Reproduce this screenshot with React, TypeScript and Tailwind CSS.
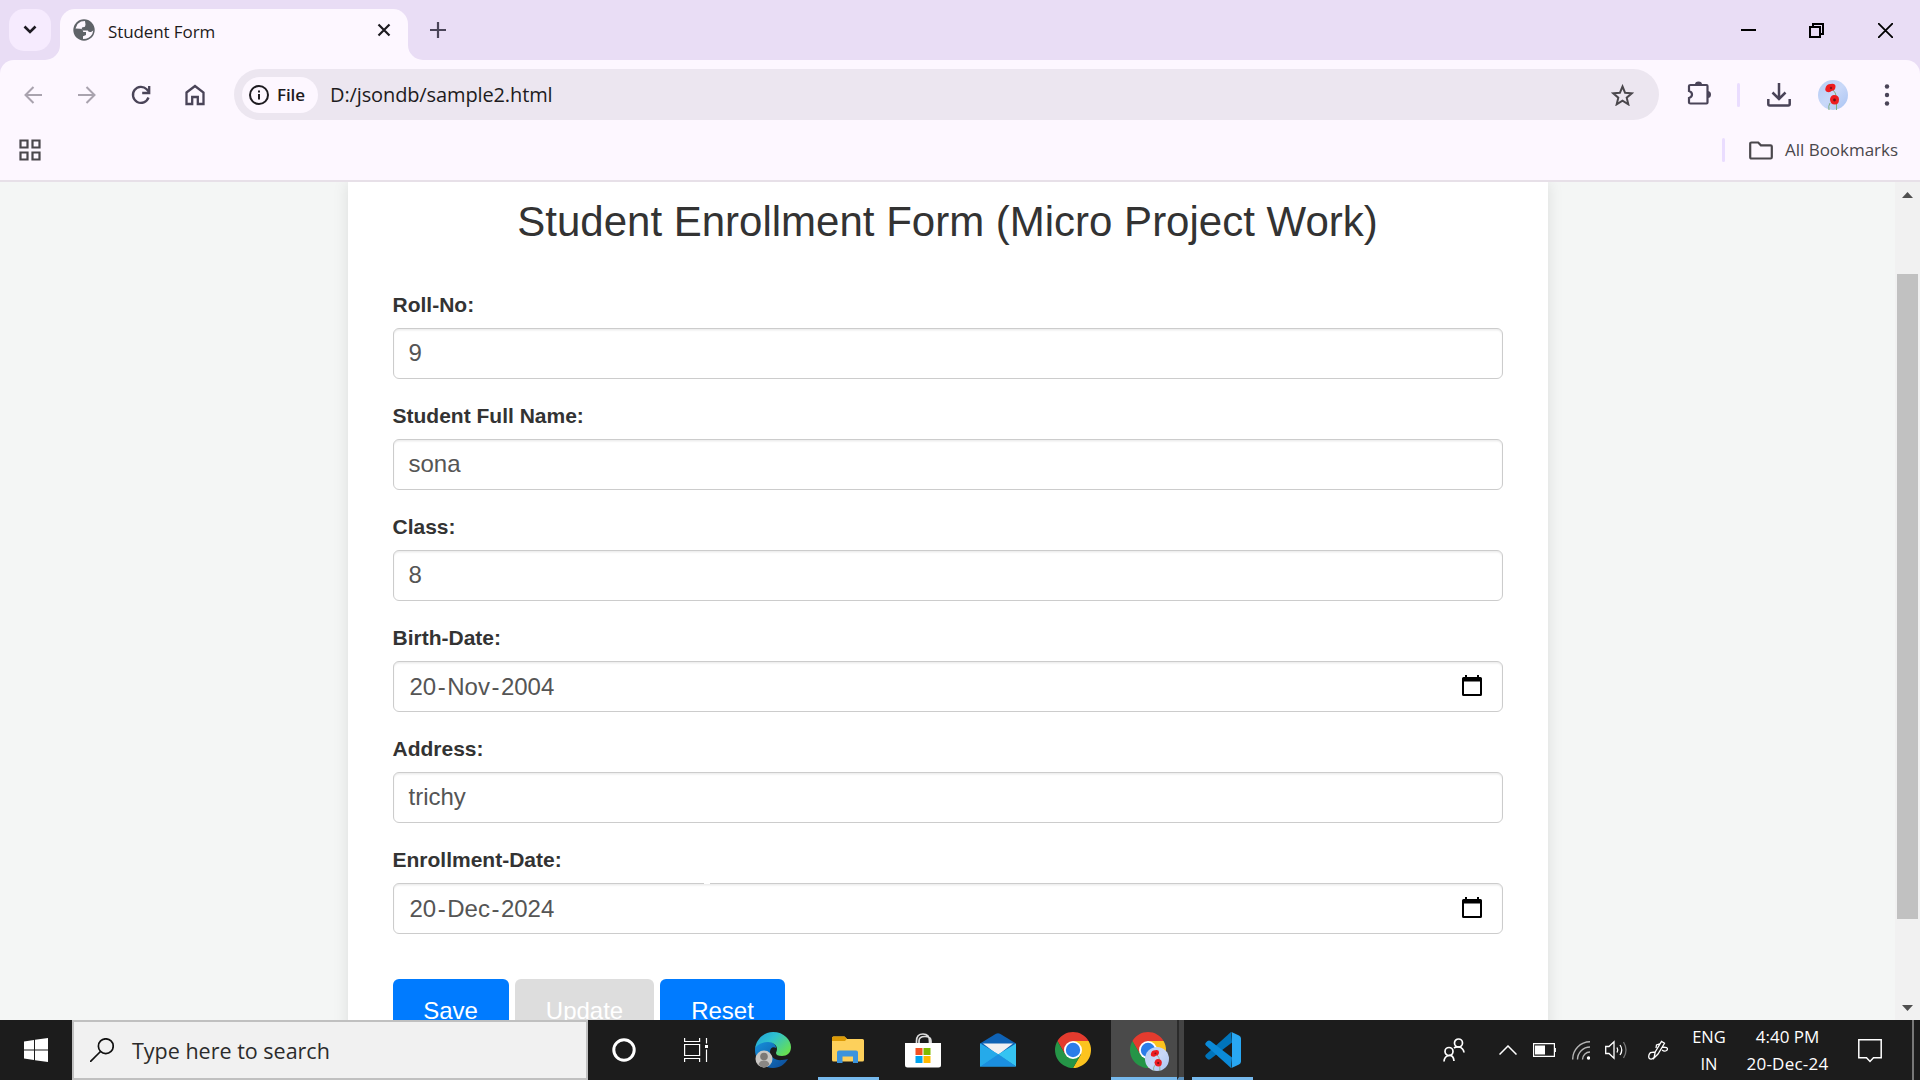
import type { ReactNode } from "react";

const ui = "font-['Open_Sans',sans-serif]";

function Poppies({ size }: { size: number }) {
  return (
    <svg width={size} height={size} viewBox="0 0 30 30">
      <defs>
        <linearGradient id="sky" x1="0" y1="0" x2="1" y2="1">
          <stop offset="0" stopColor="#b4cdf6" />
          <stop offset=".5" stopColor="#c9d8f8" />
          <stop offset="1" stopColor="#a9c3f3" />
        </linearGradient>
      </defs>
      <circle cx="15" cy="15" r="15" fill="url(#sky)" />
      <path d="M15 10q3 3 3 6M18.500 24v6M12 23q-2 3-1 7" stroke="#7fae80" strokeWidth="1" fill="none" />
      <path d="M7.500 8q1-4 5-4 5-1 5 2.500 0 4-4 4.500-1 1.500-4 1-3-1-2-4Z" fill="#ee1c20" />
      <path d="M12 19q1-4 4-4 5 0 5 4.500 0 5-4 5-5 0-5-5.500Z" fill="#ee1c20" />
      <circle cx="13" cy="8" r="1.200" fill="#8a1418" />
      <circle cx="16.500" cy="20" r="1.400" fill="#6a1418" />
    </svg>
  );
}

function ChromeLogo() {
  return (
    <svg width="36" height="36" viewBox="0 0 48 48">
      <path d="M24 12H44.780A24 24 0 0 0 3.220 12L13.600 30Z" fill="#e33b2e" />
      <path d="M34.390 30 24 48A24 24 0 0 0 44.780 12H24Z" fill="#fcc31e" />
      <path d="M13.600 30 3.220 12A24 24 0 0 0 24 48L34.390 30Z" fill="#259547" />
      <circle cx="24" cy="24" r="12" fill="#fff" />
      <circle cx="24" cy="24" r="9.600" fill="#2b7de9" />
    </svg>
  );
}

function EdgeLogo() {
  return (
    <svg width="36" height="36" viewBox="0 0 36 36">
      <defs>
        <linearGradient id="edgeTop" x1="0" y1="0" x2="1" y2=".7">
          <stop offset="0" stopColor="#1f9fd9" />
          <stop offset=".45" stopColor="#2fc0cf" />
          <stop offset="1" stopColor="#66e052" />
        </linearGradient>
        <linearGradient id="edgeLow" x1="0" y1="0" x2="1" y2="1">
          <stop offset="0" stopColor="#1691dc" />
          <stop offset="1" stopColor="#0d4a96" />
        </linearGradient>
      </defs>
      <path d="M0 18C0 12 6 9 12 9c6 0 9 4 9 7-3-2-6 0-6 4 0 5 6 9 12 8 3 0 5-1 6-1C30 32 25 36 18 36 8 36 0 28 0 18Z" fill="url(#edgeLow)" />
      <path d="M0 17C1 7 9 0 18 0c11 0 18 8 18 15 0 6-4 9-9 9-4 0-6-1-6-3 0-1 1-2 1-4 0-4-4-7-9-7C7 10 1 13 0 17Z" fill="url(#edgeTop)" />
      <circle cx="9" cy="27" r="8.500" fill="#c9c7c4" />
      <circle cx="9" cy="24.500" r="3.800" fill="#7c7976" />
      <path d="M3.500 32.500q1-4 5.500-4t5.500 4q-2.500 3-5.500 3t-5.500-3Z" fill="#8a8784" />
    </svg>
  );
}

function Globe() {
  return (
    <svg width="24" height="24" viewBox="0 0 24 24">
      <circle cx="12" cy="12" r="10.700" fill="#5f6368" />
      <path d="M13 3 9 3.500 5.500 6 3.500 10.500 8 10.800q3.200.4 3.200 3.200H14v3l-3 1.200V21q6.500 0 9.300-5l1-3.500-2.300 1.500q-2.500.5-3.200-1.500H11.500q-2.500-.5-1.500-3l3-.8.500-2.200Z" fill="#fdf7ff" />
    </svg>
  );
}

function IconCell({ children, className }: { children: ReactNode; className: string }) {
  return <div className={`flex shrink-0 items-center justify-center ${className}`}>{children}</div>;
}

function TabStrip() {
  return (
    <div className="flex h-[60px] items-end bg-[#e9ddf5]">
      <div className="mb-[9px] ml-[9px] flex size-[42px] items-center justify-center rounded-[15px] bg-[#f6ebfe]">
        <svg width="14" height="10" viewBox="0 0 14 10" fill="none" stroke="#1d1a22" strokeWidth="2.600">
          <path d="m1.500 1.500 5.500 5.500 5.500-5.500" />
        </svg>
      </div>
      <div className="relative ml-[9px] flex h-[51px] w-[348px] items-center rounded-t-[15px] bg-[#fdf7ff] pb-[9px] pl-3">
        <svg className="absolute bottom-0 -left-[15px]" width="15" height="15"><path d="M15 0v15H0A15 15 0 0 0 15 0Z" fill="#fdf7ff" /></svg>
        <svg className="absolute -right-[15px] bottom-0" width="15" height="15"><path d="M0 0v15h15A15 15 0 0 1 0 0Z" fill="#fdf7ff" /></svg>
        <Globe />
        <span className={`ml-3 mt-[3px] w-[253px] text-[17px] tracking-[-0.1px] text-[#1d1b20] ${ui}`}>Student Form</span>
        <svg className="ml-4" width="14" height="14" viewBox="0 0 14 14" stroke="#1d1b20" strokeWidth="2.200"><path d="m1.500 1.500 11 11m0-11-11 11" /></svg>
      </div>
      <svg className="mb-[22px] ml-[22px]" width="16" height="16" viewBox="0 0 16 16" stroke="#4a4458" strokeWidth="2.200"><path d="M8 0v16M0 8h16" /></svg>
      <div className="ml-auto flex h-[60px] items-center pr-[27px]">
        <svg width="15" height="15"><path d="M0 7h15" stroke="#000" strokeWidth="2" /></svg>
        <svg className="ml-[53px]" width="15" height="15" fill="none" stroke="#000" strokeWidth="2"><path d="M1 4h10v10H1ZM4 4V1h10v10h-3" /></svg>
        <svg className="ml-[54px]" width="15" height="15" stroke="#000" strokeWidth="1.800"><path d="m0 0 15 15M15 0 0 15" /></svg>
      </div>
    </div>
  );
}

function Toolbar() {
  return (
    <div className="flex h-[69px] items-center text-[#4a4458]">
      <IconCell className="ml-1.5 w-[54px]">
        <svg width="18" height="18" fill="none" stroke="#a9a3ae" strokeWidth="2"><path d="M18 9H1.500M9.500 1l-8 8 8 8" /></svg>
      </IconCell>
      <IconCell className="w-[54px]">
        <svg width="18" height="18" fill="none" stroke="#a9a3ae" strokeWidth="2"><path d="M0 9h16.500M8.500 1l8 8-8 8" /></svg>
      </IconCell>
      <IconCell className="w-[54px]">
        <svg width="20" height="20" fill="none" stroke="#4a4458" strokeWidth="2.300"><path d="M17.500 12.500A8 8 0 1 1 15.700 4.300L18 7" /><path d="M18.200 1v7h-7" /></svg>
      </IconCell>
      <IconCell className="w-[54px]">
        <svg width="20" height="22" fill="none" stroke="#4a4458" strokeWidth="2.300"><path d="M1.500 8.500 10 2l8.500 6.500V20h-5.700v-7H7.200v7H1.500Z" /></svg>
      </IconCell>
      <div className="ml-3 flex h-[51px] w-[1425px] items-center rounded-full bg-[#ece6f0] pl-2">
        <div className="flex h-9 w-[76px] items-center rounded-full bg-[#fdf7ff] pl-[7px]">
          <svg width="20" height="20" fill="none" stroke="#1d1b20" strokeWidth="2"><circle cx="10" cy="10" r="9" /><path d="M10 9v5.500M10 5.500v2" /></svg>
          <span className={`ml-[8px] text-[17px] font-semibold tracking-[-0.1px] text-[#1d1b20] ${ui}`}>File</span>
        </div>
        <span className={`ml-3 text-[20px] tracking-[-0.12px] text-[#1d1b20] ${ui}`}>D:/jsondb/sample2.html</span>
        <svg className="mr-[25px] ml-auto" width="23" height="22" viewBox="0 0 23 22" fill="none" stroke="#4a474c" strokeWidth="2"><path d="m11.500 2.500 2.600 6.300 6.700.5-5.100 4.400 1.600 6.600-5.800-3.600-5.800 3.600 1.600-6.600-5.100-4.400 6.700-.5Z" /></svg>
      </div>
      <svg className="mb-1 ml-[28px]" width="24" height="24" viewBox="0 0 24 24">
        <path d="M3.500 4h16q1 0 1 1v16.500q0 1-1 1h-16q-1.500 0-1.500-1V17q3-1 3-3.500T2 10V5q0-1 1.500-1Z" fill="none" stroke="#4a4458" strokeWidth="2.200" />
        <path d="M8 3.500a3.500 3 0 0 1 7 0ZM20.500 10a3.500 3.500 0 0 1 0 7Z" fill="#4a4458" />
      </svg>
      <div className="ml-[26px] h-6 w-[3px] rounded bg-[#eaddff]" />
      <svg className="ml-[27px]" width="24" height="24" fill="none" stroke="#4a4458" strokeWidth="2.500"><path d="M12 0v15M5.500 9.500 12 16l6.500-6.500M1.300 16v5q0 1.500 1.500 1.500h18.400q1.500 0 1.500-1.500v-5" /></svg>
      <div className="ml-[27px]"><Poppies size={30} /></div>
      <svg className="ml-[36px]" width="6" height="22" fill="#4a4458"><circle cx="3" cy="2.500" r="2.200" /><circle cx="3" cy="11" r="2.200" /><circle cx="3" cy="19.500" r="2.200" /></svg>
    </div>
  );
}

function BookmarksBar() {
  return (
    <div className="flex h-[53px] items-start border-b-2 border-[#e7e0e8] pt-[9px]">
      <svg className="mt-px ml-[19px]" width="22" height="22" fill="none" stroke="#4a474c" strokeWidth="2.200"><path d="M1.500 1.500h7v7h-7ZM13.500 1.500h7v7h-7ZM1.500 13.500h7v7h-7ZM13.500 13.500h7v7h-7Z" /></svg>
      <div className="ml-auto flex h-6 items-center pr-[22px]">
        <div className="h-6 w-[3px] rounded bg-[#eaddff]" />
        <svg className="ml-6" width="24" height="19" fill="none" stroke="#4a474c" strokeWidth="2.200"><path d="M2.500 1.500h6.700l2.700 2.800h9.600q1.300 0 1.300 1.300v10.600q0 1.300-1.300 1.300h-19q-1.300 0-1.300-1.300V2.800q0-1.300 1.300-1.300Z" /></svg>
        <span className={`ml-3 w-[113px] whitespace-nowrap text-[17px] leading-6 tracking-[-0.02px] text-[#4a474c] ${ui}`}>All Bookmarks</span>
      </div>
    </div>
  );
}

const fields = [
  { label: "Roll-No:", value: "9", date: false },
  { label: "Student Full Name:", value: "sona", date: false },
  { label: "Class:", value: "8", date: false },
  { label: "Birth-Date:", value: "20-Nov-2004", date: true },
  { label: "Address:", value: "trichy", date: false },
  { label: "Enrollment-Date:", value: "20-Dec-2024", date: true },
];

function DateValue({ value }: { value: string }) {
  const [day, month, year] = value.split("-");
  return (
    <>
      <span className="ml-px flex items-center gap-[1.5px] pt-px">
        <span>{day}</span><span>-</span><span>{month}</span><span>-</span><span>{year}</span>
      </span>
      <svg className="mb-0.5 ml-auto mr-[5px]" width="20" height="21" viewBox="0 0 20 21">
        <path d="M3 0h2v2h10V0h2v2h1.500q1.500 0 1.500 1.500v16q0 1.500-1.500 1.500h-17Q0 21 0 19.500v-16Q0 2 1.500 2H3ZM2 6.500V19h16V6.500Z" fill="#000" />
      </svg>
    </>
  );
}

function FormPage() {
  return (
    <div className="flex h-[838px] overflow-hidden bg-[#f4f6f5] font-['Liberation_Sans',sans-serif]">
      <div className="flex w-[1895px] justify-center overflow-hidden">
        <div className="h-[960px] w-[1200px] bg-white px-[45px] shadow-[0_0_15px_rgba(0,0,0,0.1)]">
          <h1 className="mt-[15px] h-[50px] text-center text-[42px] leading-[50px] text-[#333]">Student Enrollment Form (Micro Project Work)</h1>
          <div className="mt-[42px]">
            {fields.map((f, i) => (
              <div key={f.label} className="h-[111px]">
                <label className="block h-[39px] pt-[1px] text-[21px] leading-[30px] font-bold text-[#333]">{f.label}</label>
                <div className="relative flex h-[51px] items-center rounded-[6px] border border-[#ccc] px-[15px] text-[24px] text-[#555] shadow-[inset_0_1.500px_1.500px_rgba(0,0,0,0.075)]">
                  {f.date ? <DateValue value={f.value} /> : <span className="pb-px">{f.value}</span>}
                  {i === 5 && <span className="absolute -top-px left-[310px] h-px w-1.5 bg-white" />}
                </div>
              </div>
            ))}
          </div>
          <div className="mt-[24px] flex gap-1.5 text-[24px] leading-[30px] text-white">
            <div className="h-[66px] w-[116px] rounded-[6px] bg-[#007bff] pt-[17px] text-center">Save</div>
            <div className="h-[66px] w-[139px] rounded-[6px] bg-[#ddd] pt-[17px] pl-px text-center">Update</div>
            <div className="h-[66px] w-[125px] rounded-[6px] bg-[#007bff] pt-[17px] pl-px text-center">Reset</div>
          </div>
        </div>
      </div>
      <div className="flex w-[25px] flex-col items-center bg-[#f1f1f1]">
        <svg className="mt-[10px]" width="11" height="6"><path d="M0 6 5.500 0 11 6Z" fill="#505050" /></svg>
        <div className="mt-[76px] h-[645px] w-[21px] bg-[#c1c1c1]" />
        <svg className="mt-[86px]" width="11" height="6"><path d="M0 0h11L5.500 6Z" fill="#505050" /></svg>
      </div>
    </div>
  );
}

function TaskButton({ children, className = "" }: { children: ReactNode; className?: string }) {
  return <div className={`flex h-[60px] w-[75px] shrink-0 items-center justify-center ${className}`}>{children}</div>;
}

function Taskbar() {
  return (
    <div className="flex h-[60px] bg-[#1c1c1c]">
      <div className="flex w-[72px] items-center justify-center">
        <svg width="24" height="24" viewBox="0 0 24 24" fill="#fff"><path d="M0 3.400 10 2v9.500H0ZM11 1.800 24 0v11.500H11ZM0 12.500h10V22L0 20.600ZM11 12.500h13V24l-13-1.800Z" /></svg>
      </div>
      <div className="flex w-[516px] items-center border-2 border-[#c0c0c0] bg-[#f1f1f1] pl-4">
        <svg width="24" height="24" fill="none" stroke="#111" strokeWidth="1.700"><circle cx="15.800" cy="8.200" r="7.400" /><path d="M10.500 13.500 0 24" /></svg>
        <span className={`ml-[18px] pt-[3px] text-[21.500px] text-[#2b2b2b] ${ui}`}>Type here to search</span>
      </div>
      <TaskButton className="-ml-0.5">
        <svg width="24" height="24"><circle cx="12" cy="12" r="10.200" fill="none" stroke="#fff" strokeWidth="3" /></svg>
      </TaskButton>
      <TaskButton className="-ml-[3px]">
        <svg width="24" height="24" fill="none" stroke="#fff" strokeWidth="1.200"><path d="M.6 0v3.500h15V0M.6 6.500h15v11H.6ZM.6 24v-3.500h15V24M22.500 0v5.500M22.500 11.500V24" /><path d="M21 7h3v3h-3Z" fill="#fff" stroke="none" /></svg>
      </TaskButton>
      <TaskButton className="ml-0.5"><EdgeLogo /></TaskButton>
      <TaskButton className="relative">
        <svg width="32" height="28" viewBox="0 0 32 28">
          <path d="M0 2q0-1.500 1.500-1.500h11L15 3H30.500Q32 3 32 4.500V24q0 1.500-1.500 1.500h-29Q0 25.500 0 24Z" fill="#fdd05b" />
          <path d="M0 2q0-1.500 1.500-1.500h11L15 2.800 13 5H0Z" fill="#dc9a05" />
          <path d="M5 27V16.500q0-2 2-2h17q2 0 2 2V27h-5v-6.500H10.500V27Z" fill="#3b93dc" />
        </svg>
        <span className="absolute bottom-0 left-2 h-[3px] w-[61px] bg-[#76b9ed]" />
      </TaskButton>
      <TaskButton>
        <svg width="36" height="35" viewBox="0 0 36 35">
          <path d="M11.500 12V8q0-7 6.500-7t6.500 7v4M14 12V8q0-4.500 6-4.500T26 8v3" fill="none" stroke="#ddd" strokeWidth="1.700" />
          <path d="M0 10h36v22q0 2.500-2.500 2.500h-31Q0 34.500 0 32Z" fill="#fff" />
          <path d="M10.500 15h7v7h-7Z" fill="#f25022" /><path d="M18.500 15h7v7h-7Z" fill="#7fba00" />
          <path d="M10.500 23h7v7h-7Z" fill="#00a4ef" /><path d="M18.500 23h7v7h-7Z" fill="#ffb900" />
        </svg>
      </TaskButton>
      <TaskButton>
        <svg width="36" height="34" viewBox="0 0 36 34">
          <path d="M0 10.500 16 .8q2-1.200 4 0l16 9.700V20H0Z" fill="#0e62b5" />
          <path d="M3 10.500h30L18 22Z" fill="#f0f0f2" />
          <path d="M0 10.500 18 21 36 33.500H0Z" fill="#25aaea" />
          <path d="M36 10.500v23L18 21.500Z" fill="#35c4f2" />
          <path d="m18 21 18 12.500H0Z" fill="#1b8fe0" />
          <path d="M0 10.500 18 21.500 0 33.500Z" fill="#25aaea" />
        </svg>
      </TaskButton>
      <TaskButton><ChromeLogo /></TaskButton>
      <TaskButton className="relative">
        <span className="absolute inset-y-0 left-[1px] w-[73px] border-b-[3px] border-[#76b9ed] bg-[#4a4a4a]" />
        <span className="absolute inset-y-0 left-[67px] w-[7px] border-b-[3px] border-l-2 border-b-[#5c92bf] border-l-[#2b2b2b] bg-[#434343]" />
        <span className="relative"><ChromeLogo /><span className="absolute top-[15px] left-[15px]"><Poppies size={24} /></span></span>
      </TaskButton>
      <TaskButton className="relative">
        <svg width="36" height="36" viewBox="0 0 36 36">
          <path d="m26 0-25 22.500q-1.500 1.500 0 3l1.500 1.500q1.500 1 3 0L27 10.500Z" fill="#0074ba" />
          <path d="m26 36-25-22.500q-1.500-1.500 0-3L2.500 9Q4 8 5.500 9L27 25.500Z" fill="#0b8ad8" />
          <path d="M26.500 0 34 3.500q2 1 2 3v23q0 2-2 3L26.500 36Q27 34 27 31V5Q27 2 26.500 0Z" fill="#29a7f2" />
        </svg>
        <span className="absolute bottom-0 left-[7px] h-[3px] w-[61px] bg-[#76b9ed]" />
      </TaskButton>

      <div className="ml-auto flex items-center text-white">
        <svg className="mr-[34px]" width="22" height="24" fill="none" stroke="#fff" strokeWidth="1.700"><circle cx="15.500" cy="5" r="4" /><circle cx="6" cy="13.500" r="4" /><path d="M1 23.500q.5-5.500 5-6t5 5.500M11 10q2-1.500 5-1 4.500 1 5 5.500" /></svg>
        <svg className="mr-4" width="18" height="10" fill="none" stroke="#fff" strokeWidth="1.500"><path d="m.5 9.500 8.500-8.500 8.500 8.500" /></svg>
        <svg className="mr-4" width="23" height="14" fill="none" stroke="#fff" strokeWidth="1.200"><path d="M.6.6h20.800v12.800H.6ZM22.300 5v4" /><path d="M2 2.500h10v9H2Z" fill="#fff" stroke="none" /></svg>
        <svg className="mr-[15px]" width="18" height="19" fill="none" stroke="#b5b5b5" strokeWidth="1.400"><path d="M.7 18.500A17.500 17.500 0 0 1 18 .8M5.500 18.500A12.500 12.500 0 0 1 18 6M10.500 18.500A7.500 7.500 0 0 1 18 11" /><circle cx="16.500" cy="17" r="1.700" fill="#fff" stroke="none" /></svg>
        <svg className="mr-[21px]" width="22" height="20" fill="none" stroke="#fff" strokeWidth="1.300"><path d="M.7 6.500H4L9 1.700v16.600L4 13.500H.7ZM12 7.500q1.500 2.500 0 5M15 5q3.500 5 0 10" /><path d="M18.500 2q5 8 0 16" stroke="#777" /></svg>
        <svg className="mr-[25px]" width="20" height="21" fill="none" stroke="#fff" strokeWidth="1.300"><path d="m6 18 1.200-6L13.500 1.500l3 1.800L10 14Zm1-6L2.500 12.500Q0 15 1 18q2 2.500 5-.5M14 10q2.500 2 4.500.5t0-3L14.500 7M12.500 3.500 8.500 5l-.5 3" /></svg>
        <div className={`flex w-[32px] flex-col items-center text-[16.500px] leading-[27px] ${ui}`}>
          <span>ENG</span><span>IN</span>
        </div>
        <div className={`ml-[20px] flex w-[85px] flex-col items-center whitespace-nowrap text-[17px] leading-[27px] ${ui}`}>
          <span>4:40 PM</span><span className="tracking-[0.25px]">20-Dec-24</span>
        </div>
        <svg className="mt-px ml-[28px]" width="24" height="24" fill="none" stroke="#fff" strokeWidth="1.500"><path d="M.8.8h22.400v18H15.500L12 22.500l-3.500-3.700H.8Z" /></svg>
        <div className="mr-1.5 ml-[30px] h-[60px] w-0.5 bg-[#777]" />
      </div>
    </div>
  );
}

export default function App() {
  return (
    <div className="flex h-[1080px] w-[1920px] flex-col overflow-hidden">
      <TabStrip />
      <div className="bg-[#e9ddf5]">
        <div className="rounded-t-[14px] bg-[#fdf7ff]">
          <Toolbar />
          <BookmarksBar />
        </div>
      </div>
      <FormPage />
      <Taskbar />
    </div>
  );
}
